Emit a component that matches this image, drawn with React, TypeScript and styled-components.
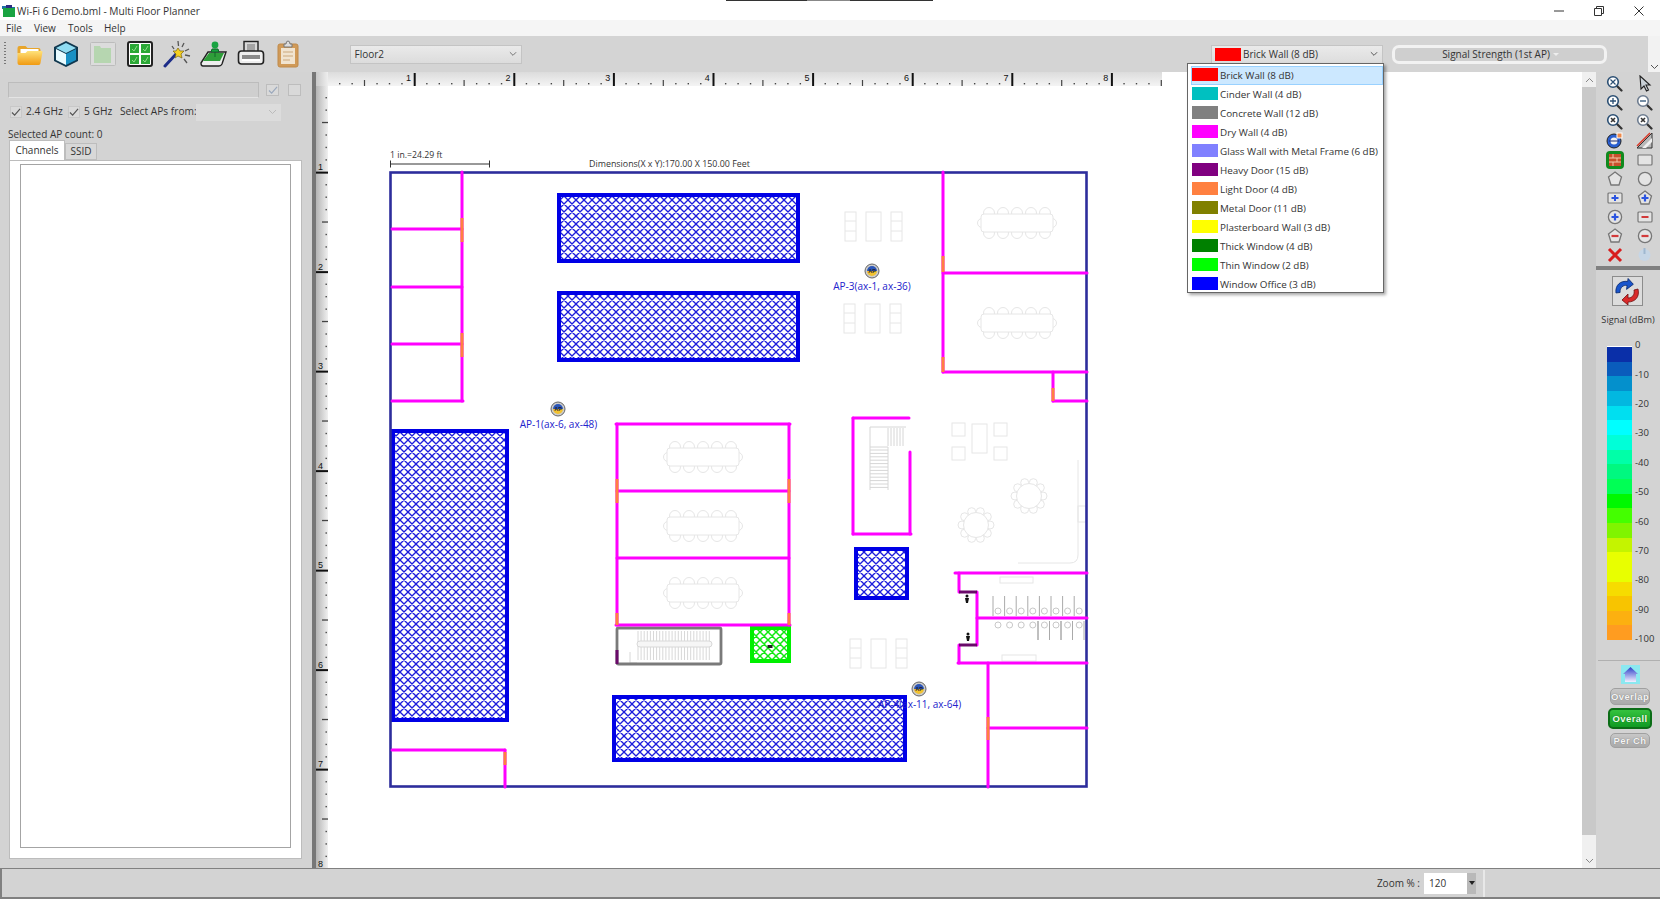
import React from "react";
import styled, { createGlobalStyle } from "styled-components";

const Global = createGlobalStyle`
  html, body { margin: 0; padding: 0; background: #fff; overflow: hidden; }
  body { font-family: "Open Sans", "Noto Sans", "Liberation Sans", sans-serif; color: #222; }
  * { box-sizing: border-box; }
`;

const Win = styled.div`
  width: 1660px; height: 899px; display: flex; flex-direction: column; overflow: hidden; background: #fff;
`;
const TitleBar = styled.div`
  height: 20px; flex: none; display: flex; align-items: center; background: #fff; padding: 2px 0 0 2px; position: relative;
`;
const TitleText = styled.span`
  font-size: 10.2px; margin-left: 1px; color: #333; white-space: nowrap;
`;
const TopEdge = styled.div`
  position: absolute; left: 726px; top: 0; width: 207px; height: 1px;
  background: linear-gradient(90deg, #333 0 39%, #888 39% 60%, #333 60% 100%);
`;
const WinButtons = styled.div`
  margin-left: auto; margin-right: 1px; display: flex; width: 120px; height: 18px; align-items: center;
`;
const WinBtn = styled.span`
  width: 40px; height: 18px; display: flex; align-items: center; justify-content: center;
`;
const MenuBar = styled.div`
  height: 16px; flex: none; background: #f5f5f5; display: flex; align-items: center; padding-left: 6px; font-size: 10px; color: #333;
`;
const MenuItem = styled.span<{ $w: number }>`
  width: ${(p) => p.$w}px;
`;
const Toolbar = styled.div`
  height: 36px; flex: none; background: #d4d4d4; display: flex; align-items: center; position: relative; z-index: 3;
`;
const Grip = styled.div`
  width: 2px; height: 24px; margin-left: 4px; margin-right: 4.5px;
  background: repeating-linear-gradient(180deg, #777 0 1px, transparent 1px 3px);
`;
const ToolSlot = styled.div`
  width: 37px; height: 32px; display: flex; align-items: center; justify-content: center;
`;
const ComboBase = styled.div`
  height: 19px; display: flex; align-items: center; font-size: 10px; color: #333; padding-bottom: 1px;
  background: linear-gradient(#eaeaea, #dcdcdc); border: 1px solid #c4c4c4; flex: none; position: relative;
`;
const FloorCombo = styled(ComboBase)`
  width: 172px; margin-left: 43px; padding-left: 4px;
`;
const MaterialCombo = styled(ComboBase)`
  width: 172px; margin-left: auto; padding-left: 3px; border-bottom: none;
`;
const ComboArrow = styled.span`
  position: absolute; right: 4px; top: 5px; width: 8px; height: 8px; display: flex;
`;
const Swatch = styled.span<{ $c: string }>`
  width: 26px; height: 13px; flex: none; background: ${(p) => p.$c}; margin-right: 2px;
`;
const Dropdown = styled.div`
  position: absolute; left: -25px; top: 17px; width: 197px; height: 230px; background: #fff;
  border: 1px solid #666; box-shadow: 2px 2px 3px rgba(0,0,0,.35); padding: 2px 0 0 4px; z-index: 10;
`;
const DropRow = styled.div<{ $on?: boolean }>`
  height: 19px; display: flex; align-items: center; font-size: 9.85px; white-space: nowrap; color: #333; padding-bottom: 1px;
  margin-left: -1px; padding-left: 1px;
  background: ${(p) => (p.$on ? "#cce8ff" : "transparent")};
  box-shadow: ${(p) => (p.$on ? "inset 0 0 0 1px #99d1ff" : "none")};
`;
const SignalCombo = styled.div`
  width: 215px; height: 19px; margin-left: 9px; flex: none; border: 3px solid #f2f2f2; border-radius: 7px; background: #cfcfcf;
  display: flex; align-items: center; justify-content: center; font-size: 10px; color: #333; padding-left: 2px;
`;
const Caret = styled.span`
  width: 0; height: 0; margin-left: 3px; border: 3px solid transparent; border-top-color: #eee; border-bottom: none;
`;
const Overflow = styled.div`
  width: 12px; height: 36px; margin-left: 41px; flex: none; background: #f2f2f2; display: flex; align-items: flex-end; justify-content: center; padding-bottom: 2px;
`;
const Main = styled.div`
  height: 796px; flex: none; display: flex;
`;
const LeftPanel = styled.div`
  width: 312px; flex: none; background: #d3d3d3; padding: 10px 10px 9px 9px; display: flex; flex-direction: column;
`;
const FilterRow = styled.div`
  display: flex; align-items: center; height: 16px;
`;
const DisabledInput = styled.div`
  width: 251px; height: 16px; margin-left: -1px; background: #cfcfcf; border: 1px solid #bcbcbc; border-bottom-color: #e4e4e4;
`;
const SmallBox = styled.span<{ $first?: boolean }>`
  width: 13px; height: 12px; margin-left: ${(p) => (p.$first ? 7 : 9)}px; display: flex; align-items: center; justify-content: center;
  border: 1px solid #bdbdbd; background: #d9d9d9;
`;
const BandRow = styled.div`
  display: flex; align-items: center; height: 17px; margin-top: 6px; font-size: 10.2px; color: #333; white-space: nowrap; line-height: 15px;
`;
const Check = styled.span`
  width: 12px; height: 12px; display: flex; align-items: center; justify-content: center; margin: 0 4px 1px 1px; flex: none;
  background: #dadada; border: 1px solid #c8c8c8;
`;
const BandLabel = styled.span<{ $w: number }>`
  width: ${(p) => p.$w}px; flex: none; padding-bottom: 2px;
`;
const ApSelect = styled.div`
  width: 85px; height: 17px; background: #dcdcdc; position: relative; flex: none;
`;
const Count = styled.div`
  font-size: 10px; height: 14px; line-height: 14px; margin-top: 6px; margin-left: -1px; color: #333;
`;
const Tabs = styled.div`
  display: flex; align-items: flex-end; height: 19px; margin-top: 0;
`;
const Tab = styled.div<{ $on?: boolean }>`
  height: ${(p) => (p.$on ? 20 : 17)}px; width: ${(p) => (p.$on ? 56 : 32)}px; font-size: 10px; color: #333; padding-bottom: 1px;
  display: flex; align-items: center; justify-content: center; position: relative; z-index: 1;
  background: ${(p) => (p.$on ? "#fff" : "#d8d8d8")};
  border: 1px solid #bdbdbd; border-bottom: ${(p) => (p.$on ? "none" : "1px solid #bdbdbd")};
`;
const Pane = styled.div`
  width: 293px; flex: 1; background: #fff; border: 1px solid #bcbcbc; padding: 3px 10px 10px 10px; display: flex;
`;
const ApList = styled.div`
  flex: 1; background: #fff; border: 1px solid #a4a4a4;
`;
const Splitter = styled.div`
  width: 4px; flex: none; background: #777;
`;
const Work = styled.div`
  width: 1266px; flex: none; display: grid; grid-template-columns: 12px 1fr; grid-template-rows: 14px 1fr; background: #fff;
`;
const Corner = styled.div`
  background: linear-gradient(90deg, #c8c8c8, #eee);
`;
const TopRulerWrap = styled.div`
  background: linear-gradient(#dcdcdc, #f4f4f4); width: 834px; height: 14px; display: flex;
`;
const LeftRulerWrap = styled.div`
  background: linear-gradient(90deg, #b4b4b4, #f0f0f0); display: flex;
`;
const Canvas = styled.div`
  background: #fff; display: flex;
`;
const ScrollBar = styled.div`
  width: 14px; flex: none; background: #c9c9c9; display: flex; flex-direction: column; justify-content: space-between;
`;
const ScrollBtn = styled.div<{ $h: number; $end?: boolean }>`
  height: ${(p) => p.$h}px; background: #f0f0f0; display: flex; justify-content: center;
  align-items: ${(p) => (p.$end ? "flex-end" : "center")}; padding-bottom: ${(p) => (p.$end ? 4 : 0)}px;
`;
const RightPanel = styled.div`
  width: 64px; flex: none; background: #d3d3d3; display: flex; flex-direction: column; padding-top: 2px;
`;
const ToolGrid = styled.div`
  display: grid; grid-template-columns: 30px 30px; grid-auto-rows: 19px; padding-left: 3.5px;
`;
const ToolCell = styled.div`
  display: flex; align-items: center; justify-content: center;
`;
const ThickSep = styled.div`
  height: 4px; margin-top: 2px; background: #808080; flex: none;
`;
const SwapBtn = styled.div`
  width: 31px; height: 30px; margin: 6px auto 0 16px; border: 1px solid #8c8c8c; background: #dcdcdc; display: flex; align-items: center; justify-content: center;
`;
const PanelCaption = styled.div`
  font-size: 9.2px; text-align: center; height: 14px; line-height: 14px; margin-top: 7px; color: #333; white-space: nowrap;
`;
const Legend = styled.div`
  display: flex; margin-top: 19px; padding-left: 11px; height: 294px;
`;
const Bands = styled.div`
  width: 25px; height: 294px; display: flex; flex-direction: column; border-top: 1px solid #fff; flex: none;
`;
const BandStep = styled.div<{ $c: string }>`
  flex: 1; background: ${(p) => p.$c};
`;
const Scale = styled.div`
  margin: -16px 0 0 3px; display: flex; flex-direction: column; font-size: 9.5px; color: #333; height: 330px; flex: none;
`;
const ScaleItem = styled.div`
  height: 29.4px; flex: none; display: flex; align-items: center;
`;
const ThinSep = styled.div`
  height: 1px; margin: 20px 0 0 2px; background: #b0b0b0; flex: none;
`;
const HomeBtn = styled.div`
  width: 19px; height: 19px; margin: 4px 0 4px 25px; display: flex; flex: none;
`;
const ModeBtn = styled.div<{ $on?: boolean; $short?: boolean }>`
  width: ${(p) => (p.$on ? 44 : 40)}px; height: ${(p) => (p.$on ? 21 : p.$short ? 15 : 17)}px; flex: none;
  margin: ${(p) => (p.$on ? "3px 0 4px 12px" : "0 0 0 14px")};
  border-radius: 5px; font: bold 9.5px "Liberation Sans", sans-serif; letter-spacing: .4px;
  display: flex; align-items: center; justify-content: center; color: ${(p) => (p.$on ? "#e8ffe8" : "#f4f4f4")};
  background: ${(p) => (p.$on ? "linear-gradient(#35c23f, #0f9a22)" : "linear-gradient(#c8c8c8, #a9a9a9)")};
  border: ${(p) => (p.$on ? "2px solid #0b6d16" : "1px solid #a0a0a0")};
  text-shadow: ${(p) => (p.$on ? "0 0 1px #06520e" : "0 0 1px #666")};
`;
const StatusBar = styled.div`
  height: 31px; flex: none; background: #d3d3d3; border: 2px solid #808080; border-right: none; border-top-width: 1px; display: flex; align-items: center;
  justify-content: flex-end; font-size: 10px; color: #333;
`;
const ZoomLabel = styled.span`
  margin-right: 4px;
`;
const ZoomInput = styled.div`
  width: 43px; height: 21px; background: #fff; display: flex; align-items: center; padding-left: 5px;
`;
const ZoomDrop = styled.div`
  width: 9px; height: 21px; background: #b9b9b9; display: flex; align-items: center; justify-content: center;
`;
const StatusTail = styled.div`
  width: 177px; height: 27px; margin-left: 7px; border-left: 2px solid #e8e8e8;
`;

const Chevron = ({ up, c = "#888" }: { up?: boolean; c?: string }) => (
  <svg width="9" height="6" viewBox="0 0 9 6"><path d={up ? "M1 5l3.5-3.5L8 5" : "M1 1l3.5 3.5L8 1"} fill="none" stroke={c} strokeWidth="1" /></svg>
);

/* ---------- toolbar drawings ---------- */
const Folder = () => (
  <svg width="27" height="26" viewBox="0 0 26 26">
    <defs><linearGradient id="fo" x1="0" y1="0" x2="0" y2="1"><stop offset="0" stopColor="#ffe27a" /><stop offset="1" stopColor="#f09a12" /></linearGradient></defs>
    <path d="M1 7q0-2 2-2h6l2 2h11q2 0 2 2v3H1z" fill="#e8a52a" />
    <path d="M4 8h18v6H4z" fill="#fff" />
    <path d="M1 12h8l2-2h14q1 0 1 1l-2 11q0 2-2 2H3q-2 0-2-2z" fill="url(#fo)" />
  </svg>
);
const Cube = () => (
  <svg width="26" height="28" viewBox="0 0 26 28">
    <path d="M13 1l12 6v14l-12 6-12-6V7z" fill="#10384f" />
    <path d="M13 3l10 5-10 5L3 8z" fill="#8fdcf2" />
    <path d="M3 9l10 5v11L3 20z" fill="#e8fbff" />
    <path d="M23 9l-10 5v11l10-5z" fill="#1890c4" />
  </svg>
);
const Plan3 = () => (
  <svg width="26" height="26" viewBox="0 0 26 26">
    <rect x=".5" y="1.5" width="25" height="23" rx="1" fill="#dcdcdc" stroke="#bcbcbc" />
    <path d="M4 5h6l1 2h10v15H4z" fill="#b6d6b0" />
  </svg>
);
const GridIcon = () => (
  <svg width="26" height="26" viewBox="0 0 26 26">
    <rect x="1" y="1" width="24" height="24" rx="2" fill="#fff" stroke="#222" strokeWidth="2" />
    {[[3, 3], [14, 3], [3, 14], [14, 14]].map(([x, y]) => (
      <g key={x + "-" + y}><rect x={x} y={y} width="9" height="9" fill="#2ba836" /><path d={`M${x + 2} ${y + 5}l2 2 3-5`} stroke="#8fdc88" fill="none" /></g>
    ))}
  </svg>
);
const Wand = () => (
  <svg width="28" height="28" viewBox="0 0 28 28">
    <path d="M2 26L14 13" stroke="#1c2c88" strokeWidth="3" strokeLinecap="round" />
    <path d="M15 8l2 3 4 0-3 3 1 4-4-2-3 2 1-4-3-3 3 0z" fill="#f5cf20" stroke="#7a6410" strokeWidth=".7" />
    <path d="M9 6l2 3M15 1l.5 5M21 3l-2 4M26 9l-4 2M27 16l-5-1M24 23l-3-4" stroke="#555" strokeWidth="1.3" />
  </svg>
);
const PinBook = () => (
  <svg width="28" height="28" viewBox="0 0 28 28">
    <path d="M1 23L8 12h18l-4 12q-1 2-3 2H3q-2 0-2-3z" fill="#eee" stroke="#222" strokeWidth="1.4" />
    <path d="M3 21L9 13h15l-4 8z" fill="#2f9e3a" />
    <circle cx="15" cy="5" r="3.4" fill="#19a341" />
    <path d="M12 9h6l1 3h-8zM15 12v5" fill="#19a341" stroke="#0c6a26" />
  </svg>
);
const Printer = () => (
  <svg width="28" height="28" viewBox="0 0 28 28">
    <rect x="7" y="1.5" width="14" height="12" fill="#d8d8d8" stroke="#222" strokeWidth="1.4" />
    <rect x="10" y="4" width="8" height="8" fill="#a4a4a4" />
    <rect x="1.5" y="11" width="25" height="13" rx="3" fill="#efefef" stroke="#222" strokeWidth="1.6" />
    <rect x="5" y="15" width="18" height="4" fill="#8a8a8a" />
    <rect x="5" y="19" width="18" height="2" fill="#fff" />
  </svg>
);
const Clipboard = () => (
  <svg width="24" height="28" viewBox="0 0 24 28">
    <rect x="2" y="4" width="20" height="23" rx="2" fill="#d09a58" stroke="#c08a4a" />
    <rect x="5" y="8" width="14" height="16" fill="#f1e4d0" />
    <path d="M7 12h10M7 16h10M7 20h7" stroke="#d8bc98" strokeWidth="1.4" />
    <path d="M8 7V4h2q0-3 2-3t2 3h2v3z" fill="#ddd" stroke="#777" />
  </svg>
);
const AppIcon = () => (
  <svg width="14" height="14" viewBox="0 0 14 14">
    <path d="M0 2h6l1 1h6v2H0z" fill="#1d6fa8" />
    <rect x="1" y="4" width="12" height="9" fill="#19a341" />
    <rect x="4" y="1" width="6" height="3" fill="#2c2c80" />
  </svg>
);

/* ---------- right panel drawings ---------- */
const Mag = ({ children, grey }: { children?: React.ReactNode; grey?: boolean }) => (
  <svg width="17" height="17" viewBox="0 0 17 17">
    <path d="M10.5 10.5L15.5 15.5" stroke="#333" strokeWidth="2.2" strokeLinecap="round" />
    <circle cx="7" cy="7" r="5.3" fill="#fff" stroke={grey ? "#6d7c8f" : "#2b4f73"} strokeWidth="1.6" />
    {children}
  </svg>
);
const plus = <path d="M4 7h6M7 4v6" stroke="#2b4f73" strokeWidth="1.3" />;
const minus = <path d="M4 7h6" stroke="#2b4f73" strokeWidth="1.3" />;
const cross = <path d="M5 5l4 4M9 5l-4 4" stroke="#333" strokeWidth="1.6" />;
const Pent = ({ fill = "#e4e4e4", children }: { fill?: string; children?: React.ReactNode }) => (
  <svg width="16" height="16" viewBox="0 0 16 16">
    <path d="M8 1l6.5 5-2.5 8H4L1.5 6z" fill={fill} stroke="#777" strokeWidth="1.3" />
    {children}
  </svg>
);
const Round = ({ children }: { children?: React.ReactNode }) => (
  <svg width="16" height="16" viewBox="0 0 16 16">
    <circle cx="8" cy="8" r="6.6" fill="#e4e4e4" stroke="#777" strokeWidth="1.3" />
    {children}
  </svg>
);
const Rct = ({ children }: { children?: React.ReactNode }) => (
  <svg width="16" height="12" viewBox="0 0 16 12">
    <rect x="1" y="1" width="14" height="10" rx="1" fill="#e4e4e4" stroke="#777" strokeWidth="1.2" />
    {children}
  </svg>
);
const bluePlus = <path d="M4.5 8h7M8 4.5v7" stroke="#2c55e0" strokeWidth="2.2" />;
const redMinus = <path d="M4.5 8h7" stroke="#d23a3a" strokeWidth="2.2" />;
const toolIcons: React.ReactNode[] = [
  <Mag key="a">{<path d="M4.5 4.5l5 5M9.5 4.5l-5 5" stroke="#2b4f73" strokeWidth="1.2" />}</Mag>,
  <svg key="b" width="14" height="17" viewBox="0 0 14 17"><path d="M2 1l10 9H8l2.5 5-2 1-2.500-5L3 14z" fill="#c9d0d6" stroke="#222" strokeWidth="1.1" /></svg>,
  <Mag key="c">{plus}</Mag>,
  <Mag key="d" grey>{minus}</Mag>,
  <Mag key="e">{cross}</Mag>,
  <Mag key="f" grey>{cross}</Mag>,
  <svg key="g" width="17" height="17" viewBox="0 0 17 17"><circle cx="8" cy="9" r="7" fill="#2a5fd0" stroke="#222" /><circle cx="8" cy="9" r="3.5" fill="#f3f3f3" /><path d="M3 9h10" stroke="#1a2a70" /><rect x="11" y="1" width="5" height="5" fill="#ee8a4a" stroke="#fff" /></svg>,
  <svg key="h" width="17" height="17" viewBox="0 0 17 17"><path d="M1 16L16 1v15z" fill="#b8b8b8" stroke="#333" /><path d="M6 16L16 6v4l-6 6z" fill="#eee" /><path d="M1 14L14 1" stroke="#d83a2a" strokeWidth="1.6" /></svg>,
  <svg key="i" width="18" height="18" viewBox="0 0 18 18"><rect x="0" y="0" width="18" height="18" rx="4" fill="#118a1e" /><rect x="3" y="3" width="12" height="12" fill="#c8502c" /><path d="M3 7h12M3 11h12M7 3v4M11 7v4M7 11v4" stroke="#f0c8a8" strokeWidth="1" /></svg>,
  <Rct key="j" />,
  <Pent key="k" />,
  <Round key="l" />,
  <Rct key="m"><path d="M4.500 6h7M8 3v6" stroke="#2c55e0" strokeWidth="2" /></Rct>,
  <Pent key="n">{bluePlus}</Pent>,
  <Round key="o">{bluePlus}</Round>,
  <Rct key="p"><path d="M4.500 6h7" stroke="#d23a3a" strokeWidth="2" /></Rct>,
  <Pent key="q">{redMinus}</Pent>,
  <Round key="r">{redMinus}</Round>,
  <svg key="s" width="16" height="16" viewBox="0 0 16 16"><path d="M2 2l12 12M14 2L2 14" stroke="#d81e1e" strokeWidth="3" /></svg>,
  <svg key="t" width="15" height="15" viewBox="0 0 15 15"><circle cx="7.500" cy="8" r="6" fill="#c6d6e6" /><rect x="6.500" y="1" width="2" height="6" fill="#9fb8d0" /></svg>,
];
const SwapIcon = () => (
  <svg width="27" height="27" viewBox="0 0 27 27">
    <path d="M3 16C1 8 6 3 13 3V0l6 5-6 6V7C9 7 6 10 7 15z" fill="#1a55cc" stroke="#0b2a70" strokeWidth=".8" transform="rotate(8 10 8)" />
    <path d="M24 11c2 8-3 13-10 13v3l-6-5 6-6v4c4 0 7-3 6-8z" fill="#d92a2a" stroke="#701010" strokeWidth=".8" />
  </svg>
);
const HomeIcon = () => (
  <svg width="19" height="19" viewBox="0 0 19 19">
    <defs><linearGradient id="ho" x1="0" y1="0" x2="0" y2="1"><stop offset="0" stopColor="#2a3fc8" /><stop offset="1" stopColor="#f4f0ff" /></linearGradient></defs>
    <rect width="19" height="19" fill="#8be8f0" />
    <path d="M9.500 2L17 9h-2v8H4V9H2z" fill="url(#ho)" />
  </svg>
);

/* ---------- rulers ---------- */
const TopRuler = () => {
  const ox = 86, s = 99.6;
  const dots: number[] = [];
  for (let x = ox - 75; x < 834; x += s / 8) dots.push(x);
  return (
    <svg width="834" height="14" viewBox="0 0 834 14">
      {dots.map((x, i) => {
        const k = Math.round((x - ox) / (s / 8));
        const major = k % 8 === 0, half = k % 4 === 0;
        return major ? <rect key={i} x={x} y="1" width="2" height="13" fill="#111" />
          : half ? <rect key={i} x={x} y="8" width="1.2" height="6" fill="#444" />
          : <rect key={i} x={x} y="11" width="1.400" height="1.400" fill="#444" />;
      })}
      {[1, 2, 3, 4, 5, 6, 7, 8].map((n, i) => (
        <text key={n} x={ox + i * s - 8} y="9" fontSize="9" fontFamily="Liberation Sans" fill="#111">{n}</text>
      ))}
    </svg>
  );
};
const LeftRuler = () => {
  const oy = 86, s = 99.5;
  const dots: number[] = [];
  for (let y = oy - 75; y < 782; y += s / 8) dots.push(y);
  return (
    <svg width="12" height="782" viewBox="0 0 12 782">
      {dots.map((y, i) => {
        const k = Math.round((y - oy) / (s / 8));
        const major = k % 8 === 0, half = k % 4 === 0;
        return major ? <rect key={i} x="0" y={y} width="12" height="2" fill="#111" />
          : half ? <rect key={i} x="6" y={y} width="6" height="1.300" fill="#444" />
          : <rect key={i} x="9.500" y={y} width="1.400" height="1.400" fill="#444" />;
      })}
      {[1, 2, 3, 4, 5, 6, 7, 8].map((n, i) => (
        <text key={n} x="2" y={oy + i * s - 2} fontSize="9" fontFamily="Liberation Sans" fill="#111">{n}</text>
      ))}
    </svg>
  );
};

/* ---------- floor plan ---------- */
const MAG = "#ff00ff", ORG = "#ff8040", NAVY = "#2d2d9c", BLUE = "#0000e6", FURN = "#e6e6e6", PUR = "#6a0a6a";
type Seg = [number, number, number, number];
const magenta: Seg[] = [
  [462, 172, 462, 401], [392, 229, 462, 229], [392, 287, 462, 287], [392, 344, 462, 344], [392, 401, 463, 401],
  [943, 172, 943, 372], [943, 273, 1087, 273], [943, 372, 1087, 372], [1053, 372, 1053, 401], [1053, 401, 1087, 401],
  [617, 424, 617, 625], [789, 424, 789, 625], [616, 424, 790, 424], [617, 491, 789, 491], [617, 558, 789, 558], [616, 625, 790, 625],
  [853, 418, 909, 418], [853, 418, 853, 534], [910, 452, 910, 534], [853, 534, 911, 534],
  [955, 573, 1087, 573], [959, 573, 959, 592], [977, 592, 977, 645], [977, 618, 1087, 618], [959, 645, 959, 663], [958, 663, 1087, 663],
  [988, 663, 988, 787], [988, 728, 1087, 728], [392, 750, 505, 750], [505, 750, 505, 787],
];
const orange: Seg[] = [
  [462, 218, 462, 242], [462, 333, 462, 357], [943, 256, 943, 272], [943, 357, 943, 372], [1053, 388, 1053, 401],
  [617, 479, 617, 503], [789, 479, 789, 503], [617, 613, 617, 625], [789, 613, 789, 625], [988, 717, 988, 740], [505, 752, 505, 765],
];
const purple: Seg[] = [[959, 592, 977, 592], [959, 645, 977, 645], [617, 650, 617, 664]];
const hatched: [number, number, number, number][] = [
  [557, 193, 243, 70], [557, 291, 243, 71], [391, 429, 118, 293], [854, 547, 55, 53], [612, 695, 295, 67],
];

const Table = ({ cx, cy }: { cx: number; cy: number }) => (
  <g fill="#fff" stroke={FURN} strokeWidth="1">
    {[-28, -14, 0, 14, 28].map((d) => (
      <g key={d}><circle cx={cx + d} cy={cy - 10} r="5.500" /><circle cx={cx + d} cy={cy + 10} r="5.500" /></g>
    ))}
    <circle cx={cx - 35} cy={cy} r="4.500" /><circle cx={cx + 35} cy={cy} r="4.500" />
    <rect x={cx - 36} y={cy - 9} width="72" height="18" rx="3" />
  </g>
);
const Shelves = ({ x, y }: { x: number; y: number }) => (
  <g fill="none" stroke={FURN} strokeWidth="1">
    <rect x={x} y={y} width="11" height="29" /><path d={`M${x} ${y + 9}h11M${x} ${y + 19}h11`} />
    <rect x={x + 21} y={y} width="15" height="29" />
    <rect x={x + 46} y={y} width="11" height="29" /><path d={`M${x + 46} ${y + 9}h11M${x + 46} ${y + 19}h11`} />
  </g>
);
const RoundTable = ({ cx, cy }: { cx: number; cy: number }) => (
  <g fill="#fff" stroke={FURN} strokeWidth="1">
    {Array.from({ length: 10 }).map((_, i) => {
      const a = (i / 10) * Math.PI * 2;
      return <circle key={i} cx={cx + Math.cos(a) * 14} cy={cy + Math.sin(a) * 14} r="4" />;
    })}
    <circle cx={cx} cy={cy} r="12.500" />
  </g>
);
const ApMark = ({ cx, cy }: { cx: number; cy: number }) => (
  <g>
    <circle cx={cx} cy={cy} r="7" fill="#ccc" stroke="#666" strokeWidth="1" />
    <path d={`M${cx - 5} ${cy}a5 5 0 0 1 10 0z`} fill="#2b56b8" />
    <path d={`M${cx - 5} ${cy}a5 5 0 0 0 10 0z`} fill="#f2c230" />
    <text x={cx} y={cy + 2} fontSize="5.500" fontWeight="bold" textAnchor="middle" fontFamily="Liberation Sans" fill="#223">AP</text>
  </g>
);
const Person = ({ x, y }: { x: number; y: number }) => (
  <g fill="#111"><circle cx={x} cy={y - 4} r="1.500" /><path d={`M${x - 2} ${y - 2}h4l-1 5h-2z`} /></g>
);
const FloorPlan = () => (
  <svg width="1254" height="782" viewBox="328 86 1254 782">
    <defs>
      <pattern id="hatch" width="8" height="8" patternUnits="userSpaceOnUse">
        <rect width="8" height="8" fill="#fff" />
        <path d="M-1 1L1 -1M0 8L8 0M7 9L9 7M-1 7L1 9M0 0L8 8M7 -1L9 1" stroke="#1c1cdc" strokeWidth="1.350" />
      </pattern>
      <pattern id="hatchG" width="8" height="8" patternUnits="userSpaceOnUse">
        <rect width="8" height="8" fill="#fff" />
        <path d="M-1 1L1 -1M0 8L8 0M7 9L9 7M-1 7L1 9M0 0L8 8M7 -1L9 1" stroke="#12e812" strokeWidth="1.500" />
      </pattern>
    </defs>
    {/* furniture */}
    <Table cx={1017} cy={223} /><Table cx={1017} cy={323} /><Table cx={703} cy={457} /><Table cx={703} cy={526} /><Table cx={703} cy={593} />
    <Shelves x={845} y={212} /><Shelves x={844} y={304} /><Shelves x={850} y={639} />
    <g fill="none" stroke={FURN}>
      {[[952, 423], [994, 423], [952, 447], [994, 447]].map(([x, y]) => <rect key={x + "" + y} x={x} y={y} width="13" height="13" />)}
      <rect x="972" y="424" width="15" height="29" />
      <path d="M1078 460v95q0 8-8 8h-52" /><rect x="1078" y="506" width="8" height="16" />
      <rect x="1000" y="577" width="33" height="6" /><rect x="1002" y="655" width="34" height="6" />
    </g>
    <RoundTable cx={1029} cy={496} /><RoundTable cx={976} cy={525} />
    {/* stairs */}
    <g fill="none" stroke="#d6d6d6" strokeWidth="1">
      <path d="M870 427h36M870 427v63M888 447v43M870 447h18" />
      {Array.from({ length: 12 }).map((_, i) => <path key={i} d={`M870 ${450 + i * 3.400}h18`} />)}
      {Array.from({ length: 6 }).map((_, i) => <path key={i} d={`M${888 + i * 3} 428v18`} />)}
    </g>
    <g fill="none" stroke="#d8d8d8" strokeWidth="1">
      {Array.from({ length: 24 }).map((_, i) => <path key={i} d={`M${638 + i * 3.100} 631v29`} />)}
      <rect x="637" y="641" width="75" height="6" rx="3" fill="#f6f6f6" />
      <path d="M630 652v11h7" />
    </g>
    {/* restroom */}
    <g fill="none" stroke="#c8c8c8">
      {[0, 1, 2, 3, 4, 5, 6, 7].map((i) => (
        <g key={i}>
          <circle cx={998 + i * 11.600} cy={611} r="3" />
          <path d={`M${993 + i * 11.600} 596v20`} stroke="#aaa" />
          <circle cx={998 + i * 11.600} cy={625} r="3" />
          <path d={`M${1038 + (i % 5) * 11.500} 621v19`} stroke="#aaa" />
        </g>
      ))}
    </g>
    <Person x={967} y={600} /><Person x={968} y={638} />
    {/* hatched windows */}
    {hatched.map(([x, y, w, h]) => (
      <rect key={x + "-" + y} x={x + 2} y={y + 2} width={w - 4} height={h - 4} fill="url(#hatch)" stroke={BLUE} strokeWidth="4" />
    ))}
    <rect x="752" y="628" width="37" height="33" fill="url(#hatchG)" stroke="#00f000" strokeWidth="4" />
    <rect x="767.500" y="645" width="5" height="3" fill="#222" />
    <rect x="617" y="628" width="104" height="36" rx="1.500" fill="none" stroke="#7a7a7a" strokeWidth="2.800" />
    {/* walls */}
    <rect x="390.500" y="172.500" width="696" height="614" fill="none" stroke={NAVY} strokeWidth="2.600" />
    {magenta.map(([a, b, c, d]) => <line key={`${a}${b}${c}${d}`} x1={a} y1={b} x2={c} y2={d} stroke={MAG} strokeWidth="3" strokeLinecap="round" />)}
    {orange.map(([a, b, c, d]) => <line key={`${a}${b}${c}${d}`} x1={a} y1={b} x2={c} y2={d} stroke={ORG} strokeWidth="3" />)}
    {purple.map(([a, b, c, d]) => <line key={`${a}${b}${c}${d}`} x1={a} y1={b} x2={c} y2={d} stroke={PUR} strokeWidth="3" />)}
    {/* scale */}
    <text x="390" y="158" fontSize="8.700" fontFamily="Open Sans" fill="#333">1 in.=24.29 ft</text>
    <path d="M390.500 160.500v7M390.500 164h99M489.500 160.500v7" stroke="#333" fill="none" />
    <text x="589" y="167" fontSize="8.900" fontFamily="Open Sans" fill="#333">Dimensions(X x Y):170.00 X 150.00 Feet</text>
    {/* APs */}
    <ApMark cx={558} cy={409} /><ApMark cx={872} cy={271} /><ApMark cx={919} cy={689} />
    <g fontSize="10" fontFamily="Open Sans" fill="#2222cc" textAnchor="middle">
      <text x="558.500" y="428">AP-1(ax-6, ax-48)</text>
      <text x="872" y="290">AP-3(ax-1, ax-36)</text>
      <text x="919.500" y="708">AP-4(ax-11, ax-64)</text>
    </g>
  </svg>
);

const materials: [string, string][] = [
  ["Brick Wall (8 dB)", "#ff0000"], ["Cinder Wall (4 dB)", "#00c0c0"], ["Concrete Wall (12 dB)", "#808080"], ["Dry Wall (4 dB)", "#ff00ff"],
  ["Glass Wall with Metal Frame (6 dB)", "#8080ff"], ["Heavy Door (15 dB)", "#800080"], ["Light Door (4 dB)", "#ff8040"], ["Metal Door (11 dB)", "#808000"],
  ["Plasterboard Wall (3 dB)", "#ffff00"], ["Thick Window (4 dB)", "#008000"], ["Thin Window (2 dB)", "#00ff00"], ["Window Office (3 dB)", "#0000ff"],
];
const bands = ["#0a2fa8", "#0a5cbc", "#0490cc", "#02b8e0", "#00dff0", "#00ffff", "#00ffd8", "#00ffa8", "#00f880", "#00ff55",
  "#00f800", "#44ff00", "#80f400", "#c4f400", "#e8ff00", "#e8ff00", "#f6dc00", "#f8c400", "#fcb010", "#ff9c20"];
const CheckMark = ({ c = "#555" }: { c?: string }) => (
  <svg width="10" height="9" viewBox="0 0 11 10"><path d="M1 5l3 3 6-7" fill="none" stroke={c} strokeWidth="1.300" /></svg>
);
const ApSelectArrow = styled.span`
  position: absolute; right: 4px; top: 5px; display: flex;
`;

export default function App() {
  return (
    <Win>
      <Global />
      <TitleBar>
        <TopEdge />
        <AppIcon />
        <TitleText>Wi-Fi 6 Demo.bml - Multi Floor Planner</TitleText>
        <WinButtons>
          <WinBtn><svg width="10" height="10" viewBox="0 0 10 10"><path d="M0 5h10" stroke="#333" /></svg></WinBtn>
          <WinBtn><svg width="10" height="10" viewBox="0 0 10 10"><path d="M.5 2.500h7v7h-7zM2.500 2.500V.5h7v7h-2" fill="none" stroke="#333" /></svg></WinBtn>
          <WinBtn><svg width="10" height="10" viewBox="0 0 10 10"><path d="M.5 .5l9 9M9.500 .5l-9 9" stroke="#333" /></svg></WinBtn>
        </WinButtons>
      </TitleBar>
      <MenuBar>
        <MenuItem $w={28}>File</MenuItem><MenuItem $w={34}>View</MenuItem><MenuItem $w={36}>Tools</MenuItem><MenuItem $w={30}>Help</MenuItem>
      </MenuBar>
      <Toolbar>
        <Grip />
        <ToolSlot><Folder /></ToolSlot><ToolSlot><Cube /></ToolSlot><ToolSlot><Plan3 /></ToolSlot><ToolSlot><GridIcon /></ToolSlot>
        <ToolSlot><Wand /></ToolSlot><ToolSlot><PinBook /></ToolSlot><ToolSlot><Printer /></ToolSlot><ToolSlot><Clipboard /></ToolSlot>
        <FloorCombo>Floor2<ComboArrow><Chevron c="#666" /></ComboArrow></FloorCombo>
        <MaterialCombo>
          <Swatch $c="#ff0000" />Brick Wall (8 dB)<ComboArrow><Chevron c="#444" /></ComboArrow>
          <Dropdown>
            {materials.map(([n, c], i) => (
              <DropRow key={n} $on={i === 0}><Swatch $c={c} />{n}</DropRow>
            ))}
          </Dropdown>
        </MaterialCombo>
        <SignalCombo>Signal Strength (1st AP)<Caret /></SignalCombo>
        <Overflow><Chevron c="#555" /></Overflow>
      </Toolbar>
      <Main>
        <LeftPanel>
          <FilterRow>
            <DisabledInput />
            <SmallBox $first><CheckMark c="#9aa8bc" /></SmallBox>
            <SmallBox />
          </FilterRow>
          <BandRow>
            <Check><CheckMark /></Check><BandLabel $w={41}>2.4 GHz</BandLabel>
            <Check><CheckMark /></Check><BandLabel $w={36}>5 GHz</BandLabel>
            <BandLabel $w={76}>Select APs from:</BandLabel>
            <ApSelect><ApSelectArrow><Chevron c="#bbb" /></ApSelectArrow></ApSelect>
          </BandRow>
          <Count>Selected AP count: 0</Count>
          <Tabs><Tab $on>Channels</Tab><Tab>SSID</Tab></Tabs>
          <Pane><ApList /></Pane>
        </LeftPanel>
        <Splitter />
        <Work>
          <Corner />
          <TopRulerWrap><TopRuler /></TopRulerWrap>
          <LeftRulerWrap><LeftRuler /></LeftRulerWrap>
          <Canvas><FloorPlan /></Canvas>
        </Work>
        <ScrollBar>
          <ScrollBtn $h={15}><Chevron up /></ScrollBtn>
          <ScrollBtn $h={33} $end><Chevron /></ScrollBtn>
        </ScrollBar>
        <RightPanel>
          <ToolGrid>{toolIcons.map((ic, i) => <ToolCell key={i}>{ic}</ToolCell>)}</ToolGrid>
          <ThickSep />
          <SwapBtn><SwapIcon /></SwapBtn>
          <PanelCaption>Signal (dBm)</PanelCaption>
          <Legend>
            <Bands>{bands.map((c, i) => <BandStep key={i} $c={c} />)}</Bands>
            <Scale>{[0, -10, -20, -30, -40, -50, -60, -70, -80, -90, -100].map((v) => <ScaleItem key={v}>{v}</ScaleItem>)}</Scale>
          </Legend>
          <ThinSep />
          <HomeBtn><HomeIcon /></HomeBtn>
          <ModeBtn>Overlap</ModeBtn>
          <ModeBtn $on>Overall</ModeBtn>
          <ModeBtn $short>Per Ch</ModeBtn>
        </RightPanel>
      </Main>
      <StatusBar>
        <ZoomLabel>Zoom % :</ZoomLabel>
        <ZoomInput>120</ZoomInput>
        <ZoomDrop><svg width="6" height="4" viewBox="0 0 6 4"><path d="M0 0h6L3 4z" fill="#222" /></svg></ZoomDrop>
        <StatusTail />
      </StatusBar>
    </Win>
  );
}
